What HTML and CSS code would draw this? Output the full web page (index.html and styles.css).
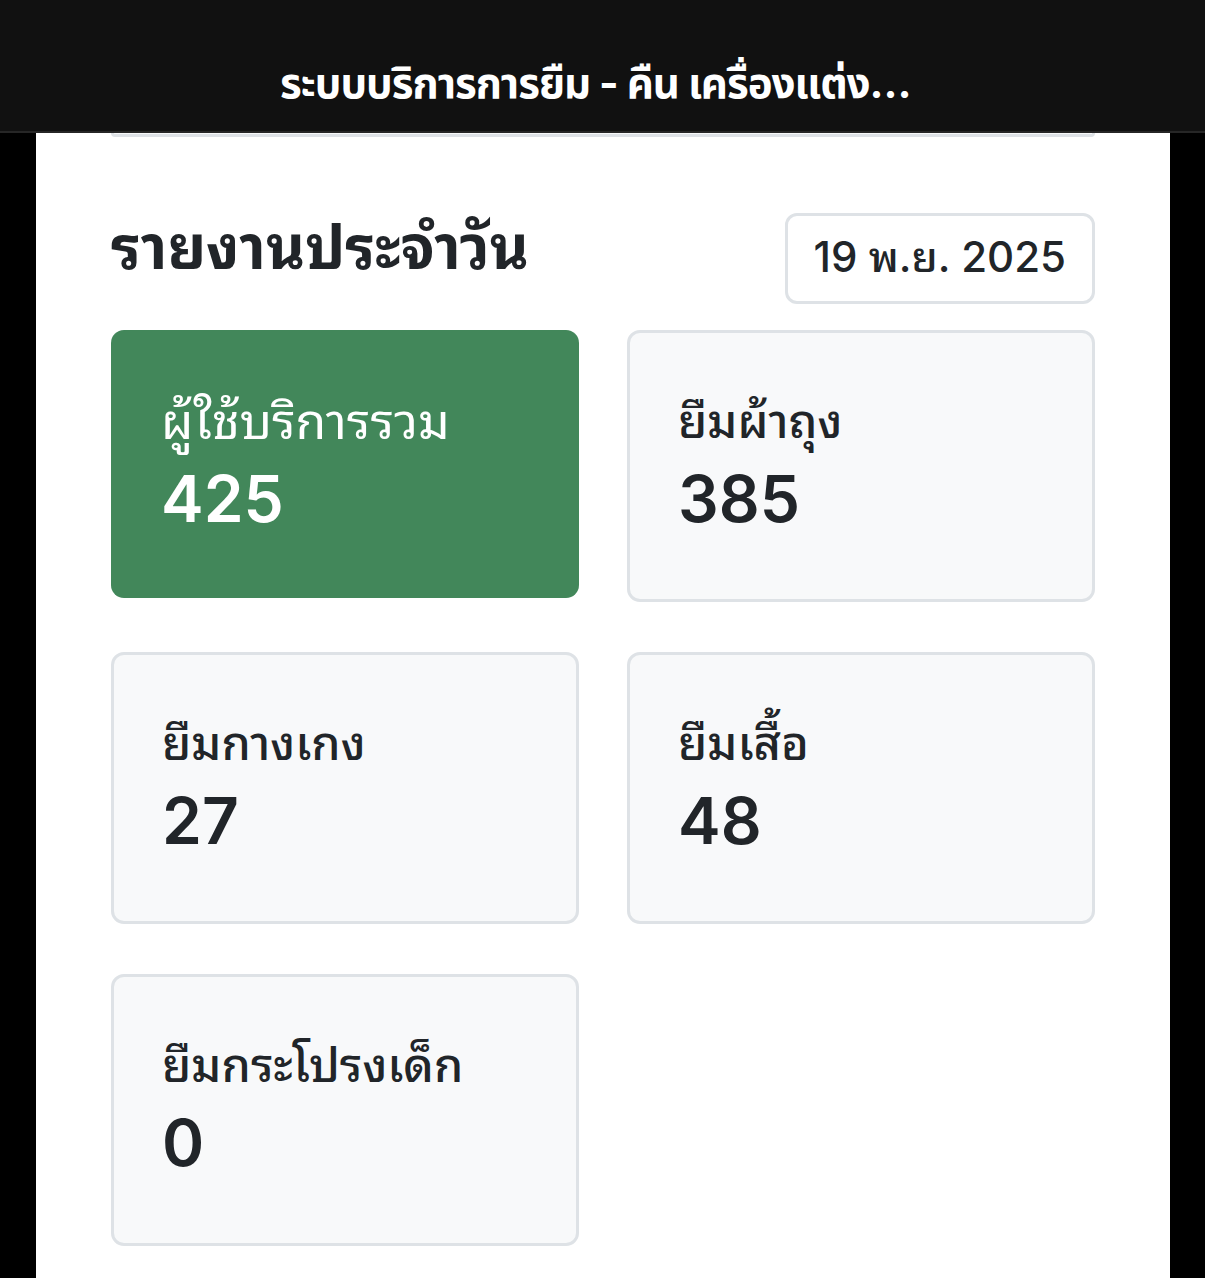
FILE: index.html
```html
<!DOCTYPE html>
<html lang="th">
<head>
<meta charset="utf-8">
<title>รายงานประจำวัน</title>
<link rel="stylesheet" href="styles.css">
</head>
<body>
<header class="topbar">
  <div class="topbar-title">ระบบบริการการยืม - คืน เครื่องแต่งกายสำหรับผู้เข้าวัด</div>
</header>
<main class="panel">
  <div class="prev-card"></div>
  <section class="report">
    <div class="report-head">
      <h2 class="report-title">รายงานประจำวัน</h2>
      <div class="date-box">19 พ.ย. 2025</div>
    </div>
    <div class="stats">
      <div class="stat stat-primary">
        <div class="stat-label">ผู้ใช้บริการรวม</div>
        <div class="stat-value">425</div>
      </div>
      <div class="stat">
        <div class="stat-label">ยืมผ้าถุง</div>
        <div class="stat-value">385</div>
      </div>
      <div class="stat">
        <div class="stat-label">ยืมกางเกง</div>
        <div class="stat-value">27</div>
      </div>
      <div class="stat">
        <div class="stat-label">ยืมเสื้อ</div>
        <div class="stat-value">48</div>
      </div>
      <div class="stat">
        <div class="stat-label">ยืมกระโปรงเด็ก</div>
        <div class="stat-value">0</div>
      </div>
    </div>
  </section>
</main>
</body>
</html>
```

FILE: styles.css
```css
* { box-sizing: border-box; }
html, body { margin: 0; padding: 0; }
body {
  background: #000;
  font-family: Inter, "Noto Sans Thai Looped", "Noto Sans Thai", "Noto Sans", sans-serif;
  color: #212529;
  height: 1278px;
  overflow: hidden;
}
.topbar {
  height: 133px;
  background: #111111;
  border-bottom: 2px solid #262626;
  display: flex;
  align-items: flex-end;
  justify-content: center;
  padding: 0 270px 22px;
}
.topbar-title {
  color: #fff;
  font-family: Inter, "Noto Sans Thai", sans-serif;
  font-weight: 700;
  font-size: 42px;
  letter-spacing: -1px;
  line-height: 52px;
  white-space: nowrap;
  overflow: hidden;
  text-overflow: ellipsis;
  max-width: 645px;
}
.panel {
  margin: 0 35px 0 36px;
  background: #fff;
  padding: 0 75px 60px;
  min-height: 1145px;
}
.prev-card {
  height: 4px;
  background: #f8f9fa;
  border: 3px solid #dee2e6;
  border-top: none;
  border-radius: 0 0 12px 12px;
}
.report-head {
  display: flex;
  justify-content: space-between;
  align-items: flex-start;
  margin-top: 76px;
  margin-bottom: 26px;
}
.report-title {
  margin: 0;
  font-size: 60px;
  font-weight: 700;
  line-height: 68px;
}
.date-box {
  border: 3px solid #dee2e6;
  border-radius: 12px;
  padding: 0 26px 3px;
  height: 91px;
  display: flex;
  align-items: center;
  font-size: 42px;
  font-weight: 500;
  line-height: 50px;
}
.stats {
  display: grid;
  grid-template-columns: 1fr 1fr;
  column-gap: 48px;
  row-gap: 50px;
  align-items: start;
}
.stat {
  background: #f8f9fa;
  border: 3px solid #dee2e6;
  border-radius: 13px;
  padding: 58px 48px 60px;
}
.stat-primary {
  background: #42875a;
  border: none;
  color: #fff;
  padding: 61px 50px 59px;
}
.stat-label {
  font-size: 47px;
  font-weight: 500;
  line-height: 60px;
}
.stat-primary .stat-label { font-weight: 400; font-size: 50px; }
.stat-value {
  font-size: 64px;
  font-weight: 600;
  line-height: 80px;
  margin-top: 8px;
}
```
